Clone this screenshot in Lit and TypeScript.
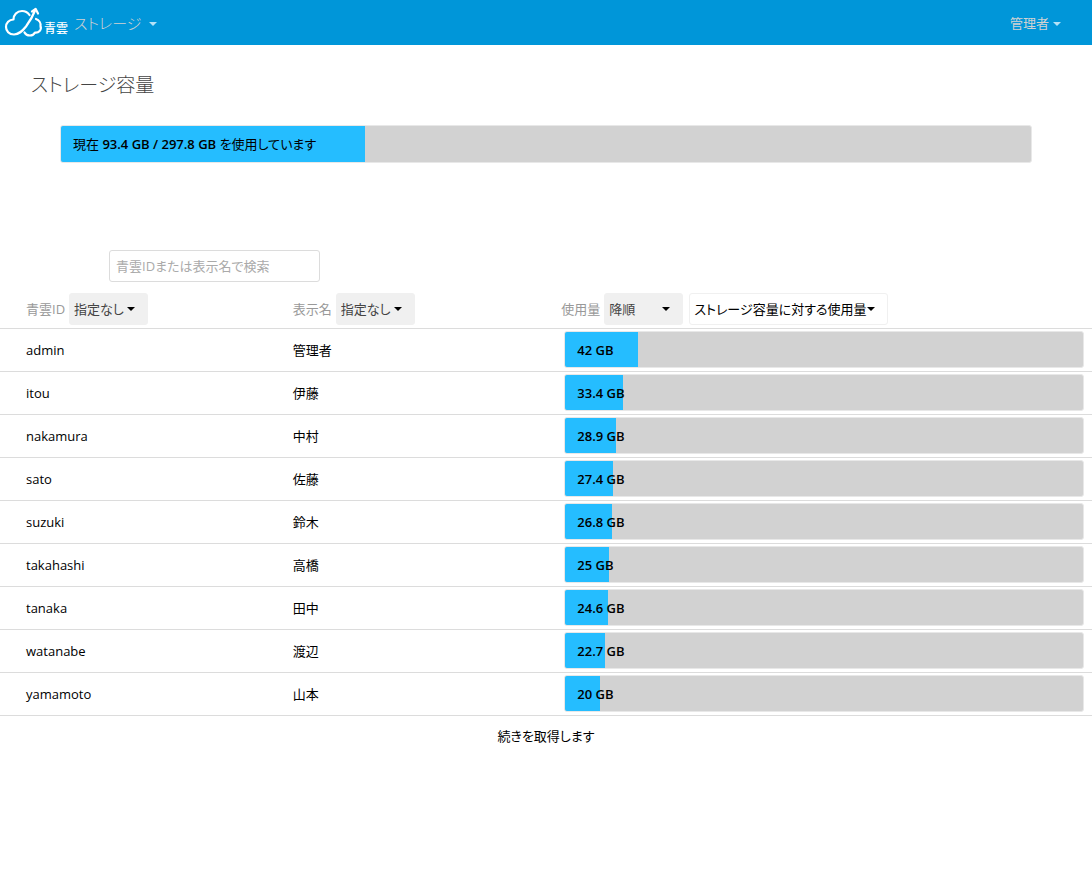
import { LitElement, html, css, svg } from "lit";
import { customElement, property } from "lit/decorators.js";

const TOTAL_GB = 297.8;
const USED_GB = 93.4;

interface User {
  id: string;
  name: string;
  gb: number;
}

const USERS: User[] = [
  { id: "admin", name: "管理者", gb: 42 },
  { id: "itou", name: "伊藤", gb: 33.4 },
  { id: "nakamura", name: "中村", gb: 28.9 },
  { id: "sato", name: "佐藤", gb: 27.4 },
  { id: "suzuki", name: "鈴木", gb: 26.8 },
  { id: "takahashi", name: "高橋", gb: 25 },
  { id: "tanaka", name: "田中", gb: 24.6 },
  { id: "watanabe", name: "渡辺", gb: 22.7 },
  { id: "yamamoto", name: "山本", gb: 20 },
];

const caret = html`<svg class="caret" viewBox="0 0 8 4" aria-hidden="true">
  ${svg`<path d="M0 0h8L4 4z" fill="currentColor" />`}
</svg>`;

/** Horizontal meter: a grey track with a blue filled part and a caption. */
@customElement("usage-bar")
export class UsageBar extends LitElement {
  @property({ type: Number }) value = 0;
  @property({ type: Number }) total = TOTAL_GB;

  static styles = css`
    :host {
      display: block;
      box-sizing: border-box;
      border: 1px solid #e8e8e8;
      border-radius: 3px;
      background: #d2d2d2;
      overflow: hidden;
    }
    .fill {
      display: flex;
      align-items: center;
      height: 100%;
      box-sizing: border-box;
      padding-left: 12px;
      background: #25bdff;
      white-space: pre;
      font-weight: 600;
      color: #000;
    }
  `;

  render() {
    const width = (this.value / this.total) * 100;
    return html`<div class="fill" style="width:${width}%"><slot></slot></div>`;
  }
}

@customElement("app-root")
export class AppRoot extends LitElement {
  static styles = css`
    :host {
      display: block;
      min-height: 100vh;
      background: #fff;
      color: #000;
      font: 13px/20px "Open Sans", "Noto Sans CJK JP", sans-serif;
      font-feature-settings: "palt";
    }
    button,
    input,
    select {
      font: inherit;
      font-feature-settings: inherit;
      box-sizing: border-box;
      margin: 0;
    }
    button {
      border: 0;
      padding: 0;
      background: none;
      color: inherit;
      cursor: pointer;
    }
    .caret {
      width: 8px;
      height: 4px;
      flex: none;
    }
    .bar {
      display: flex;
      align-items: center;
      height: 45px;
      padding: 0 31px 0 4px;
      background: #0096d9;
      color: #d2d2d2;
    }
    .bar .caret {
      margin-top: 2px;
    }
    .brand {
      display: flex;
      align-items: flex-end;
      color: #fff;
      text-decoration: none;
      font-size: 12px;
      font-weight: 500;
      line-height: 20px;
      margin-right: 6px;
    }
    .brand svg {
      width: 40px;
      height: 32px;
    }
    .menu {
      display: flex;
      align-items: center;
      gap: 8px;
      font-weight: 300;
    }
    .menu .caret {
      color: #b5e2f7;
    }
    .section {
      font-size: 15px;
    }
    .account {
      gap: 4px;
      margin-left: auto;
      font-weight: 400;
    }
    h1 {
      margin: 0;
      padding: 25px 31px;
      font-size: 19px;
      line-height: 30px;
      font-weight: 300;
      color: #444;
    }
    .total {
      height: 38px;
      margin: 0 60px;
    }
    .plain {
      font-weight: 400;
    }
    .search {
      display: block;
      width: 211px;
      height: 32px;
      margin: 87px 0 8px 109px;
      padding: 0 6px;
      border: 1px solid #dcdcdc;
      border-radius: 3px;
      background: #fff;
    }
    .search::placeholder {
      color: #aaa;
      opacity: 1;
    }
    table {
      width: 100%;
      table-layout: fixed;
      border-collapse: separate;
      border-spacing: 0;
    }
    .col-id {
      width: 26.8%;
    }
    .col-name {
      width: 24.6%;
    }
    th {
      padding: 3px 0;
      text-align: left;
      font-weight: 400;
      color: #999;
    }
    td {
      padding: 0;
      border-top: 1px solid #dcdcdc;
    }
    tbody tr:last-child td {
      border-bottom: 1px solid #dcdcdc;
    }
    th:first-child,
    td:first-child {
      padding-left: 26px;
    }
    td:last-child {
      padding: 2px 8px 3px 3px;
    }
    td usage-bar {
      height: 37px;
    }
    .head {
      display: flex;
      align-items: center;
      gap: 4px;
    }
    .pick {
      display: grid;
      align-items: center;
    }
    .pick > * {
      grid-area: 1 / 1;
    }
    .pick .caret {
      justify-self: end;
      margin-right: 13px;
      color: #000;
      pointer-events: none;
    }
    select {
      appearance: none;
      width: 79px;
      height: 32px;
      padding: 0 4px;
      border: 1px solid #f0f0f0;
      border-radius: 3px;
      background: #f0f0f0;
      color: #444;
    }
    .wide {
      margin-left: 2px;
    }
    .wide select {
      width: 199px;
      background: #fff;
      color: #000;
    }
    .more {
      display: block;
      margin: 0 auto;
      padding: 10px;
    }
  `;

  private select(id: string, options: string[], label: string) {
    return html`<span class="pick">
      <select id=${id} aria-label=${label}>
        ${options.map((o) => html`<option>${o}</option>`)}
      </select>
      ${caret}
    </span>`;
  }

  render() {
    const order = ["指定なし", "昇順", "降順"];
    return html`
      <header class="bar">
        <a class="brand" href="#">
          <svg viewBox="0 0 40 32" fill="none" stroke="#fff" stroke-width="2.2" stroke-linecap="round" stroke-linejoin="round" aria-hidden="true">
            <path d="M25.5 8C23.500 5 21 4 18 4c-5 0-8.500 4-8.500 8.500C5 12.500 2 16 2 20c0 4 3 7.500 8 7.500 5 0 8-3 12-8C26 14 29 9 31.500 2.500" />
            <path d="M28 4.500l3.700-2.500 2.300 4.500" />
            <path d="M32 12c3 1 5 4 4.500 7 1.500 4-2 7-5.500 6.500-1 2-3 3-5 3-2.500 0-4.500-1-5.500-3" />
          </svg>
          <span>青雲</span>
        </a>
        <button class="menu section">ストレージ ${caret}</button>
        <button class="menu account">管理者 ${caret}</button>
      </header>
      <main>
        <h1>ストレージ容量</h1>
        <usage-bar class="total" .value=${USED_GB}><span class="plain">現在 </span>${USED_GB} GB / ${TOTAL_GB} GB<span class="plain"> を使用しています</span></usage-bar>
        <input class="search" type="search" aria-label="青雲IDまたは表示名で検索" placeholder="青雲IDまたは表示名で検索" />
        <table>
          <colgroup><col class="col-id" /><col class="col-name" /><col /></colgroup>
          <thead>
            <tr>
              <th scope="col"><div class="head"><label for="by-id">青雲ID</label>${this.select("by-id", order, "青雲ID")}</div></th>
              <th scope="col"><div class="head"><label for="by-name">表示名</label>${this.select("by-name", order, "表示名")}</div></th>
              <th scope="col">
                <div class="head">
                  <label for="by-usage">使用量</label>${this.select("by-usage", ["降順", "昇順", "指定なし"], "使用量")}
                  <span class="wide">${this.select("basis", ["ストレージ容量に対する使用量"], "使用量の基準")}</span>
                </div>
              </th>
            </tr>
          </thead>
          <tbody>
            ${USERS.map(
              (u) => html`<tr>
                <td>${u.id}</td>
                <td>${u.name}</td>
                <td><usage-bar .value=${u.gb}>${u.gb} GB</usage-bar></td>
              </tr>`
            )}
          </tbody>
        </table>
        <button class="more">続きを取得します</button>
      </main>
    `;
  }
}
